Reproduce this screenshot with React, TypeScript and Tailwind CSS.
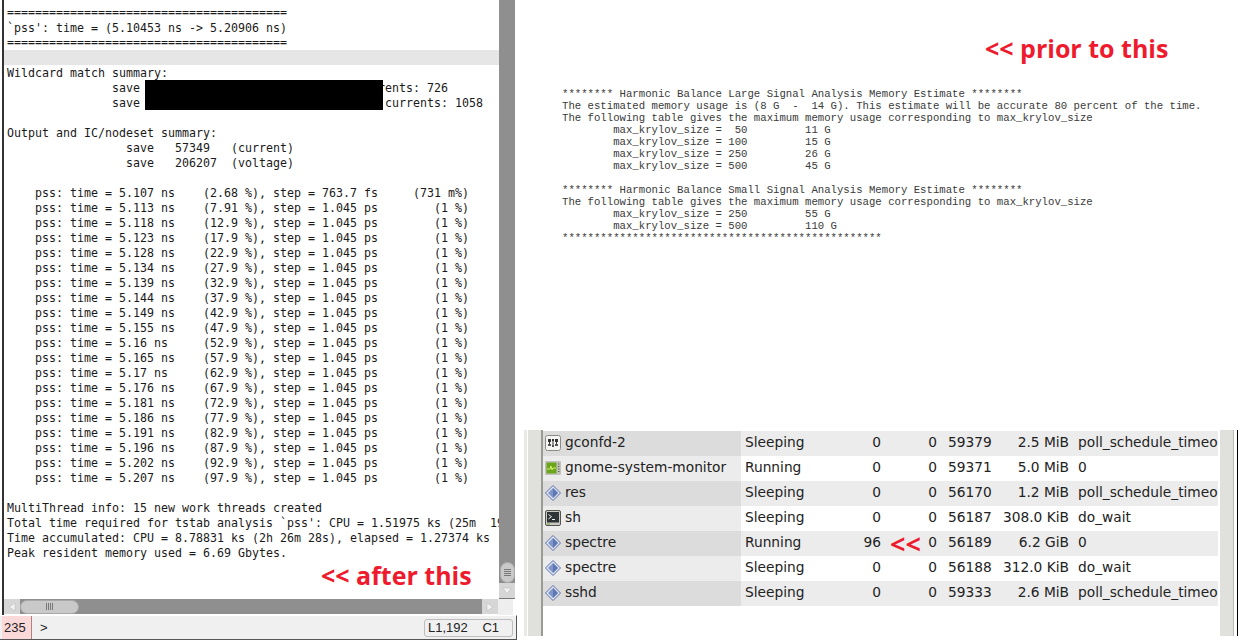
const pssRows: [string, string][] = [
  ["5.113 ns ", "(7.91 %)"], ["5.118 ns ", "(12.9 %)"], ["5.123 ns ", "(17.9 %)"], ["5.128 ns ", "(22.9 %)"],
  ["5.134 ns ", "(27.9 %)"], ["5.139 ns ", "(32.9 %)"], ["5.144 ns ", "(37.9 %)"], ["5.149 ns ", "(42.9 %)"],
  ["5.155 ns ", "(47.9 %)"], ["5.16 ns  ", "(52.9 %)"], ["5.165 ns ", "(57.9 %)"], ["5.17 ns  ", "(62.9 %)"],
  ["5.176 ns ", "(67.9 %)"], ["5.181 ns ", "(72.9 %)"], ["5.186 ns ", "(77.9 %)"], ["5.191 ns ", "(82.9 %)"],
  ["5.196 ns ", "(87.9 %)"], ["5.202 ns ", "(92.9 %)"], ["5.207 ns ", "(97.9 %)"],
];

const rule = "========================================";

const after = [
  "Wildcard match summary:",
  "               save                                  rents: 726",
  "               save                                   currents: 1058",
  "",
  "Output and IC/nodeset summary:",
  "                 save   57349   (current)",
  "                 save   206207  (voltage)",
  "",
  "    pss: time = 5.107 ns    (2.68 %), step = 763.7 fs     (731 m%)",
  ...pssRows.map(([t, p]) => `    pss: time = ${t}   ${p}, step = 1.045 ps        (1 %)`),
  "",
  "MultiThread info: 15 new work threads created",
  "Total time required for tstab analysis `pss': CPU = 1.51975 ks (25m  19s)",
  "Time accumulated: CPU = 8.78831 ks (2h 26m 28s), elapsed = 1.27374 ks (21m 14s)",
  "Peak resident memory used = 6.69 Gbytes.",
];

const estimate = [
  "******** Harmonic Balance Large Signal Analysis Memory Estimate ********",
  "The estimated memory usage is (8 G  -  14 G). This estimate will be accurate 80 percent of the time.",
  "The following table gives the maximum memory usage corresponding to max_krylov_size",
  "        max_krylov_size =  50         11 G",
  "        max_krylov_size = 100         15 G",
  "        max_krylov_size = 250         26 G",
  "        max_krylov_size = 500         45 G",
  " ",
  "******** Harmonic Balance Small Signal Analysis Memory Estimate ********",
  "The following table gives the maximum memory usage corresponding to max_krylov_size",
  "        max_krylov_size = 250         55 G",
  "        max_krylov_size = 500         110 G",
  "**************************************************",
];

type Icon = "conf" | "monitor" | "diamond" | "term";
const procs: { icon: Icon; name: string; status: string; cpu: string; id: string; mem: string; wchan: string }[] = [
  { icon: "conf", name: "gconfd-2", status: "Sleeping", cpu: "0", id: "59379", mem: "2.5 MiB", wchan: "poll_schedule_timeout" },
  { icon: "monitor", name: "gnome-system-monitor", status: "Running", cpu: "0", id: "59371", mem: "5.0 MiB", wchan: "0" },
  { icon: "diamond", name: "res", status: "Sleeping", cpu: "0", id: "56170", mem: "1.2 MiB", wchan: "poll_schedule_timeout" },
  { icon: "term", name: "sh", status: "Sleeping", cpu: "0", id: "56187", mem: "308.0 KiB", wchan: "do_wait" },
  { icon: "diamond", name: "spectre", status: "Running", cpu: "96", id: "56189", mem: "6.2 GiB", wchan: "0" },
  { icon: "diamond", name: "spectre", status: "Sleeping", cpu: "0", id: "56188", mem: "312.0 KiB", wchan: "do_wait" },
  { icon: "diamond", name: "sshd", status: "Sleeping", cpu: "0", id: "59333", mem: "2.6 MiB", wchan: "poll_schedule_timeout" },
];

function ProcIcon({ kind }: { kind: Icon }) {
  if (kind === "conf")
    return (
      <svg width="16" height="16" viewBox="0 0 16 16" className="shrink-0">
        <rect x="0.5" y="0.5" width="15" height="15" rx="2" fill="#f4f4f2" stroke="#8a8a86" />
        <path d="M3 4h3v3H3zM7 4h2v2H7zM10 4h3v3h-3z" fill="#333" />
        <path d="M4.5 7v4M8 6v5M11.5 7v4" stroke="#333" strokeWidth="1" />
        <rect x="3" y="9" width="3" height="2" fill="#555" />
        <rect x="7" y="10" width="2" height="2" fill="#555" />
        <rect x="10" y="9" width="3" height="2" fill="#555" />
      </svg>
    );
  if (kind === "monitor")
    return (
      <svg width="16" height="16" viewBox="0 0 16 16" className="shrink-0">
        <rect x="0" y="1" width="16" height="14" rx="1" fill="#c2c2bc" />
        <rect x="1.5" y="2.5" width="10" height="11" fill="#6aa51c" />
        <path d="M2 9h3l1-3 1 4 1-2h3" fill="none" stroke="#d5f06a" strokeWidth="1" />
        <path d="M13 4h1.5M13 6.5h1.5M13 9h1.5M13 11.5h1.5" stroke="#66665f" strokeWidth="1" />
      </svg>
    );
  if (kind === "term")
    return (
      <svg width="16" height="16" viewBox="0 0 16 16" className="shrink-0">
        <rect x="0.5" y="0.5" width="15" height="15" rx="1.5" fill="#c8c8c4" stroke="#55554f" />
        <rect x="2" y="2" width="12" height="10.5" fill="#2e3436" />
        <path d="M3.5 4.5l3 2.2-3 2.2" fill="none" stroke="#eeeeec" strokeWidth="1" />
        <path d="M7 9.5h3" stroke="#eeeeec" strokeWidth="1" />
        <path d="M2 14h3" stroke="#6cae2a" strokeWidth="1" />
      </svg>
    );
  return (
    <svg width="16" height="16" viewBox="0 0 16 16" className="shrink-0">
      <path d="M8 .5L15.5 8 8 15.5.5 8z" fill="#dfe5f3" stroke="#5a6fa8" />
      <path d="M8 3l5 5-5 5-5-5z" fill="#7f94c8" />
      <path d="M8 3l5 5-5 5z" fill="#5f77b4" />
    </svg>
  );
}

function Thumb({ vertical }: { vertical?: boolean }) {
  return vertical ? (
    <div className="mx-auto flex h-[21px] w-[15px] flex-col items-center justify-center gap-[1px] rounded-full border border-[#a8a8a8] bg-[#c9c9c9]">
      <div className="h-px w-[7px] bg-[#777]" />
      <div className="h-px w-[7px] bg-[#777]" />
      <div className="h-px w-[7px] bg-[#777]" />
      <div className="h-px w-[7px] bg-[#777]" />
    </div>
  ) : (
    <div className="flex h-[14px] w-[59px] items-center justify-center gap-[1px] rounded-full border border-[#a8a8a8] bg-[#c9c9c9]">
      <div className="h-[7px] w-px bg-[#777]" />
      <div className="h-[7px] w-px bg-[#777]" />
      <div className="h-[7px] w-px bg-[#777]" />
      <div className="h-[7px] w-px bg-[#777]" />
    </div>
  );
}

function Arrow({ d, className }: { d: string; className: string }) {
  return (
    <div className={`flex shrink-0 items-center justify-center bg-[#d6d6d6] ${className}`}>
      <svg width="12" height="12" viewBox="0 0 12 12">
        <path d={d} fill="#f2f2f2" stroke="#b4b4b4" strokeWidth="0.5" />
      </svg>
    </div>
  );
}

const red = "font-['Open_Sans',sans-serif] font-bold text-[#ee1b2e]";

export default function App() {
  return (
    <div className="flex h-[640px] w-[1242px] overflow-hidden bg-white">
      {/* Left: log viewer */}
      <div className="flex h-full w-[517px] shrink-0 flex-col">
        <div className="flex h-[599px] shrink-0">
          <div className="ml-[2px] w-[2px] shrink-0 bg-[#333]" />
          <div className="relative h-full w-[495px] overflow-hidden whitespace-pre bg-white pl-[3px] pt-[6px] font-['DejaVu_Sans_Mono',monospace] text-[11.63px] leading-[15px] text-[#1a1a1a]">
            <div className="-mt-px mb-px h-[15px]">{rule}</div>
            <div className="h-[15px]">{"`pss': time = (5.10453 ns -> 5.20906 ns)"}</div>
            <div className="-mt-px mb-px h-[15px]">{rule}</div>
            <div className="-mt-px mb-px -ml-[3px] h-[15px] bg-[#e6e6e6]" />
            {after.map((l, i) => (
              <div key={i} className="h-[15px]">{l}</div>
            ))}
            <div className="absolute left-[141px] top-[80px] h-[30px] w-[238px] bg-black" />
            <div className={`absolute left-[317px] top-[557px] text-[25px] leading-[36px] ${red}`}>{"<< after this"}</div>
          </div>
          <div className="flex h-full w-[16px] shrink-0 flex-col justify-end bg-[#8f8f8f]">
            <Thumb vertical />
            <Arrow d="M2 3h8L6 9z" className="h-[16px] w-[16px] border-b border-[#777]" />
          </div>
        </div>
        <div className="flex h-[16px] w-[515px] shrink-0 pl-[2px]">
          <div className="w-[2px] shrink-0 bg-[#333]" />
          <Arrow d="M9 2v8L3 6z" className="h-[15px] w-[16px]" />
          <div className="flex h-[15px] w-[462px] items-center bg-[#8f8f8f]">
            <Thumb />
          </div>
          <Arrow d="M3 2v8l6-4z" className="h-[15px] w-[16px]" />
          <div className="w-[15px] bg-[#eeeeee]" />
        </div>
        <div className="flex h-[25px] shrink-0 items-center border-y border-y-[#fff] border-b-[#555] border-r border-r-[#555] bg-[#f0f0f0] pl-[2px] pr-[3px] font-['Liberation_Sans',sans-serif] text-[13px] text-[#222]">
          <div className="flex h-full w-[30px] items-center border-r border-[#b08080] bg-[#fbd9d9] pl-[2px]">235</div>
          <div className="ml-[8px] flex-1">&gt;</div>
          <div className="flex h-[18px] w-[89px] items-center justify-between rounded-[3px] border border-[#bdbdbd] bg-[#f0f0f0] pl-[3px] pr-[13px]">
            <span>L1,192</span>
            <span>C1</span>
          </div>
        </div>
      </div>

      {/* Right column */}
      <div className="flex h-full flex-1 flex-col">
        <div className="relative h-[430px] shrink-0 overflow-hidden">
          <div className={`absolute left-[468px] top-[30px] text-[25px] leading-[36px] ${red}`}>{"<< prior to this"}</div>
          <div className="whitespace-pre pl-[45px] pt-[88px] font-['Liberation_Mono',monospace] text-[10.66px] leading-[12px] text-[#3a3a3a]">
            {estimate.map((l, i) => (
              <div key={i} className="h-[12px]">{l}</div>
            ))}
          </div>
        </div>
        <div className="flex h-[206px] shrink-0 pl-[7px] font-['DejaVu_Sans',sans-serif] text-[13.75px] text-[#222]">
          <div className="w-[3px] shrink-0 bg-[#e8e8e5]" />
          <div className="ml-px w-[13px] shrink-0 bg-[#e0e0dc]" />
          <div className="w-[2px] shrink-0 bg-[#9a9a96]" />
          <div className="w-[675px] shrink-0 pt-px">
            {procs.map((p, i) => {
              const odd = i % 2 === 0;
              return (
                <div key={i} className={`flex h-[25px] items-center ${odd ? "bg-[#ececec]" : "bg-white"}`}>
                  <div className={`flex h-full w-[198px] shrink-0 items-center gap-[4px] pb-[2px] pl-[2px] ${odd ? "bg-[#dcdcdc]" : "bg-[#ececec]"}`}>
                    <ProcIcon kind={p.icon} />
                    <span>{p.name}</span>
                  </div>
                  <div className="w-[92px] shrink-0 pb-[2px] pl-[4px]">{p.status}</div>
                  <div className="w-[48px] shrink-0 pb-[2px] text-right">{p.cpu}</div>
                  <div className="relative w-[56px] shrink-0 pb-[2px] text-right">
                    {p.cpu === "96" && (
                      <span className={`absolute left-[9px] top-1/2 -translate-y-1/2 text-[27px] leading-[24px] ${red}`}>{"<<"}</span>
                    )}
                    0
                  </div>
                  <div className="w-[51px] shrink-0 pb-[2px] pl-[11px]">{p.id}</div>
                  <div className="w-[81px] shrink-0 whitespace-nowrap pb-[2px] text-right">{p.mem}</div>
                  <div className="min-w-0 flex-1 overflow-hidden whitespace-nowrap pb-[2px] pl-[9px]">{p.wchan}</div>
                </div>
              );
            })}
          </div>
          <div className="w-[2px] shrink-0" />
          <div className="w-[13px] shrink-0 bg-[#e0e0dc]" />
          <div className="w-px shrink-0 bg-[#bcbcb8]" />
          <div className="w-[3px] shrink-0" />
          <div className="w-px shrink-0 bg-black" />
        </div>
      </div>
    </div>
  );
}
